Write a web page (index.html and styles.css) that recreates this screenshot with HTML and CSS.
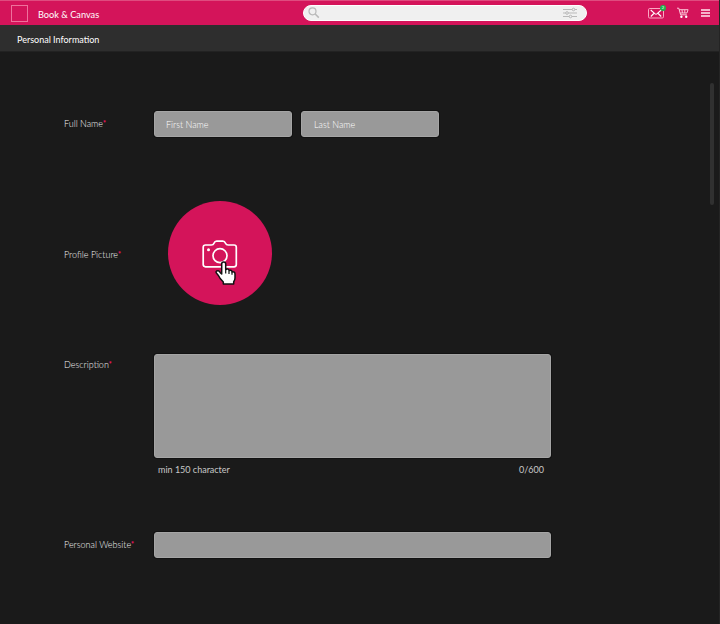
FILE: index.html
```html
<!DOCTYPE html>
<html lang="en">
<head>
<meta charset="utf-8">
<title>Book &amp; Canvas</title>
<link rel="stylesheet" href="styles.css">
</head>
<body>
<header class="topbar">
  <div class="brand"><span class="logo"></span><span class="brand-name">Book &amp; Canvas</span></div>
  <div class="search">
    <svg width="12" height="12" viewBox="0 0 12 12" fill="none" stroke="#b9b9b9"><circle cx="4.5" cy="4.3" r="3.5" stroke-width="1.2"/><path d="M7.2 7l3.6 3.6" stroke-width="1.5"/></svg>
    <svg width="14" height="12" viewBox="0 0 14 12" fill="#f0f0f0" stroke="#b9b9b9"><path d="M0 2.5h14M0 6h14M0 9.5h14"/><circle cx="10.5" cy="2.5" r="1.3"/><circle cx="4" cy="6" r="1.3"/><circle cx="7.5" cy="9.5" r="1.3"/></svg>
  </div>
  <nav class="actions">
    <span class="mail">
      <svg width="16" height="11" viewBox="0 0 16 11" fill="none" stroke="#ffb9cf"><rect x=".5" y=".5" width="15" height="9.5" rx="1.2" stroke-width=".9"/><path d="M2.7 2l4.4 3.9q.9.7 1.8 0L13.3 2M2.8 8.5l3-3M13.2 8.5l-3-3" stroke="#fff" stroke-width="1.1"/></svg>
      <span class="badge">2</span>
    </span>
    <svg class="cart" width="12" height="12" viewBox="0 0 12 12" fill="none" stroke="#ffdce7"><path d="M0 1.2h1.8l1.8 6.6h6.2M2.3 2.7h8.8L9.9 6H3.2M5 2.9l.4 3M7.8 2.9v3" stroke-width=".9"/><circle cx="4.4" cy="9.8" r="1.2" fill="#fff" stroke="none"/><circle cx="9.2" cy="9.8" r="1.2" fill="#fff" stroke="none"/></svg>
    <svg class="menu" width="9" height="8" viewBox="0 0 9 8" stroke="#ffe6ee" stroke-width="1.5"><path d="M0 1h9M0 4h9M0 7h9"/></svg>
  </nav>
</header>
<h1 class="section-title">Personal Information</h1>
<main class="page">
  <form class="form">
    <div class="row name-row">
      <span class="label">Full Name<i>*</i></span>
      <div class="names"><div class="field">First Name</div><div class="field last">Last Name</div></div>
    </div>
    <div class="row picture-row">
      <span class="label">Profile Picture<i>*</i></span>
      <div class="picture">
        <svg class="camera" width="36" height="28" viewBox="0 0 36 28" fill="none" stroke="#fff" stroke-width="1.7"><path d="M3.5 5H9.3Q11.3 5 12 3.2Q12.8 1.2 14.7 1.2H20.8Q22.7 1.2 23.5 3.2Q24.2 5 26.2 5H32Q34.3 5 34.3 7.3V24.5Q34.3 26.8 32 26.8H3.5Q1.2 26.8 1.2 24.5V7.3Q1.2 5 3.5 5Z"/><circle cx="18" cy="15.7" r="7"/><circle cx="6.5" cy="9.7" r="1.5" fill="#fff" stroke="none"/></svg>
        <svg class="cursor" width="21" height="24" viewBox="0 0 21 24"><path d="M6.7 13V3Q6.7 1 8.7 1Q10.7 1 10.7 3V8.5Q13.6 7.2 14.2 9.5Q16.8 8.8 17.1 10.9Q20 10.5 20 13V17Q20 19 18.7 20.7V23H8.3V21L5.2 17.5Q3.8 14.7 1.6 12.3Q.4 10.8 1.6 10Q3.8 8.7 5.5 12Z" fill="#fff" stroke="#111" stroke-width="1.5" stroke-linejoin="round"/><path d="M10.7 8v4.5M14 9.5v3.6M17 11v2.8" stroke="#111" stroke-width="1.2"/></svg>
      </div>
    </div>
    <div class="row description-row">
      <span class="label">Description<i>*</i></span>
      <div class="description">
        <div class="field area"></div>
        <div class="hint"><span>min 150 character</span><span>0/600</span></div>
      </div>
    </div>
    <div class="row website-row">
      <span class="label">Personal Website<i>*</i></span>
      <div class="field wide"></div>
    </div>
  </form>
  <div class="scrollbar"></div>
</main>
</body>
</html>
```
FILE: styles.css
```css
* { box-sizing: border-box; }
body { margin: 0; height: 624px; overflow: hidden; background: #1a1a1a; color: #c8c8c8; font-family: Lato, "Liberation Sans", sans-serif; font-size: 9px; border-right: 1px solid #242424; }
svg { display: block; flex: none; }
.topbar { display: grid; grid-template-columns: 303px 284px 1fr; height: 25px; background: #d4145a; border-top: 1px solid #df4b7f; }
.brand { display: flex; align-items: center; gap: 10px; padding-left: 11px; color: #fff; }
.logo { width: 17px; height: 17px; border: 1px solid #ee719c; }
.brand-name { font-size: 9.2px; line-height: 12px; padding-top: 3px; }
.search { display: flex; align-items: center; justify-content: space-between; height: 16px; margin-top: 4px; padding: 0 9px 0 4px; background: #f0f0f0; border: 1px solid #fff; border-radius: 8px; }
.actions { display: flex; align-items: center; padding-left: 61px; }
.mail { position: relative; }
.badge { position: absolute; left: 12px; top: -3px; width: 6px; height: 6px; border-radius: 50%; background: #20b34b; color: #fff; font-size: 4px; line-height: 6px; text-align: center; }
.cart { margin-left: 13px; }
.menu { margin-left: 12px; }
.section-title { margin: 0; height: 27px; padding-left: 17px; background: #2e2e2e; border-bottom: 1px solid #222; color: #fff; font-size: 9px; font-weight: 400; line-height: 29px; }
.page { display: flex; justify-content: space-between; padding: 31px 5px 0 64px; }
.form { padding-top: 28px; }
.row { display: grid; grid-template-columns: 90px 397px; }
.label { color: #f4f4f4; font-weight: 300; line-height: 12px; white-space: nowrap; }
.label i { color: #f0145f; font-style: normal; font-weight: 900; font-size: 7px; line-height: 1px; vertical-align: 1px; }
.field { height: 26px; border: 1px solid #a5a5a5; border-radius: 3px; background: #999; box-shadow: 0 0 0 1px #121212; color: #fff; font-weight: 300; line-height: 25px; padding-left: 11px; }
.names { display: grid; grid-template-columns: 138px 138px; gap: 9px; }
.last { padding-left: 12px; }
.name-row .label { padding-top: 7px; }
.picture-row { margin-top: 64px; }
.picture-row .label { padding-top: 48px; }
.picture { position: relative; width: 104px; height: 104px; margin-left: 14px; padding: 39px 0 0 34px; border-radius: 50%; background: #d4145a; }
.cursor { position: absolute; left: 47px; top: 60px; }
.description-row { margin-top: 49px; }
.description-row .label { padding-top: 5px; }
.area { height: 104px; }
.hint { display: flex; justify-content: space-between; padding: 5px 7px 0 4px; line-height: 13px; }
.website-row { margin-top: 56px; }
.website-row .label { padding-top: 7px; }
.scrollbar { width: 4px; height: 122px; border-radius: 2px; background: #303030; }
```
